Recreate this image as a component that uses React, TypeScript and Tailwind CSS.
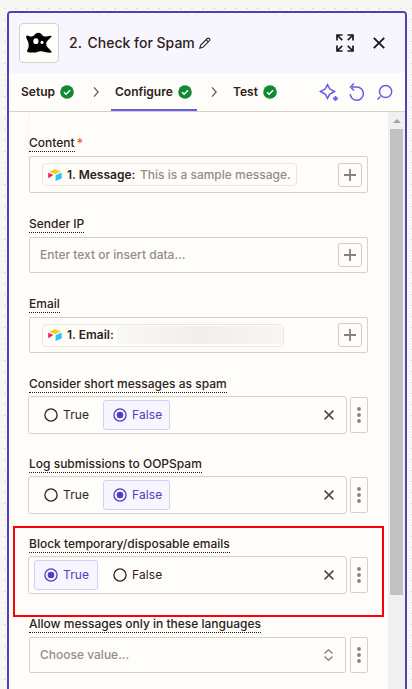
import React from "react";

function Check() {
  return (
    <svg width="14" height="14" viewBox="0 0 14 14" className="shrink-0">
      <circle cx="7" cy="7" r="6.8" fill="#0f8a35" />
      <path d="M4 7.2 6.1 9.2 10.1 5.2" fill="none" stroke="#fff" strokeWidth="1.5" />
    </svg>
  );
}

function Chevron() {
  return (
    <svg width="7" height="12" viewBox="0 0 7 12" className="shrink-0">
      <path d="M1 1.3 5.2 6 1 10.7" fill="none" stroke="#5f5b57" strokeWidth="1.2" />
    </svg>
  );
}

function Ghost() {
  return (
    <svg width="28" height="24" viewBox="0 0 28 24">
      <path
        d="M1.200 5.300C1.600 3.900 3.200 4.800 4.500 5.300 6.200 6 8 5.300 9.200 4.200 10.200 2.700 11.500 1.700 13.400 1.700c2 0 3 1.200 4.200 2.900 1.400 1.300 3.400 1.100 5.100.700 1.600-.3 3.300-1.100 3.700-.2.3 1-1 1.700-2.100 2.900-1.700 1.500-3 2.700-3.100 4.500 0 2 .9 3.500 2.100 4.600 1.200 1.100 2.800 2.500 3.500 4.500-2.400.3-4.700.1-6.700-.5-2.100-.6-3.800-1-5.900-.7-1.700.2-2.800 1.100-5 1.100-2.200.100-5.200.100-6.600-.600-1.300-.800.500-2.600.900-4.600.3-1.500.3-3-.1-4.600C2.900 9.500.8 7.300 1.200 5.300Z"
        fill="#000"
      />
      <ellipse cx="10.900" cy="10.200" rx="2.600" ry="2.900" fill="#fffdf9" />
      <ellipse cx="17" cy="11.400" rx="1.500" ry="1.700" fill="#fffdf9" />
    </svg>
  );
}

function Airtable() {
  return (
    <svg width="14" height="12" viewBox="0 0 14 12" className="shrink-0">
      <path d="M.8 2.7 7 .2l6.200 2.500L7 5.100Z" fill="#f7cb2d" />
      <path d="M7.600 6 13.700 3.700v5.900l-6.100 2.300Z" fill="#2dc5f5" />
      <path d="M.2 3.800 5.500 6.100.2 9.300Z" fill="#e5294e" />
    </svg>
  );
}

function Label({ children, required }: { children: React.ReactNode; required?: boolean }) {
  return (
    <div className="mb-1 flex h-[17px] text-xs font-medium">
      <span className="h-[17px] border-b border-dotted border-[#1f1718] leading-[15px] whitespace-nowrap">{children}</span>
      {required && <span className="ml-0.5 text-[13px] leading-[16px] text-[#ff5a1f]">*</span>}
    </div>
  );
}

function TextBox({ children, className }: { children: React.ReactNode; className?: string }) {
  return (
    <div className={"flex w-[339px] items-center justify-between rounded-[2px] border border-[#d4d1c6] pr-[5px] " + (className ?? "h-9")}>
      {children}
      <div className="flex size-6 items-center justify-center rounded-[3px] border border-[#d0cdc1]">
        <svg width="12" height="12" viewBox="0 0 12 12">
          <path d="M0 6h12M6 0v12" stroke="#88827e" strokeWidth="1.8" />
        </svg>
      </div>
    </div>
  );
}

function Menu() {
  return (
    <div className="flex h-9 w-[18px] items-center justify-center rounded-[2px] border border-[#d4d1c6]">
      <svg width="4" height="16" viewBox="0 0 4 16" fill="#88827e">
        <circle cx="2" cy="2" r="1.9" />
        <circle cx="2" cy="8" r="1.9" />
        <circle cx="2" cy="14" r="1.9" />
      </svg>
    </div>
  );
}

function Option({ label, on, width }: { label: string; on: boolean; width: string }) {
  return (
    <div
      className={
        "flex h-[30px] items-center rounded-[3px] border pl-[9px] " +
        width +
        (on ? " border-[#d3d0f8] bg-[#f7f5fe] text-[#503ebd]" : " border-transparent")
      }
    >
      <svg width="14" height="14" viewBox="0 0 14 14" className="mr-[5px] shrink-0">
        <circle cx="7" cy="7" r="6.100" fill="none" stroke="currentColor" strokeWidth="1.300" />
        {on && <circle cx="7" cy="7" r="3.300" fill="currentColor" />}
      </svg>
      <span className="text-xs tracking-[0.1px]">{label}</span>
    </div>
  );
}

function RadioField({ label, value }: { label: string; value: boolean }) {
  return (
    <div className="mb-[23px]">
      <Label>{label}</Label>
      <div className="-my-px -ml-px flex w-[340px] items-center justify-between">
        <div className="flex h-[38px] w-[319px] items-center rounded-[3px] border border-[#d4d1c6] pr-3 pl-[5px]">
          <Option label="True" on={value} width="w-16" />
          <div className="w-[5px]" />
          <Option label="False" on={!value} width="w-[67px]" />
          <svg width="10" height="10" viewBox="0 0 10 10" className="ml-auto">
            <path d="m.6.6 8.800 8.800M9.400.6.6 9.400" stroke="#4d4542" strokeWidth="1.500" />
          </svg>
        </div>
        <Menu />
      </div>
    </div>
  );
}

export default function App() {
  return (
    <div className="relative h-[689px] w-[412px] overflow-hidden bg-[#f8f7f3] bg-[radial-gradient(circle_at_5px_8.5px,#dddad3_0.7px,transparent_1px)] bg-[size:11px_11px] pt-[11px] pl-[7px] font-['Inter',sans-serif] text-xs text-[#2b2220]">
      <div className="flex h-[700px] w-[400px] flex-col overflow-hidden rounded-t-[4px] border-2 border-[#503ebd] bg-[#fffdf9]">
        <header className="flex h-[60px] shrink-0 items-center bg-[#f7f5fe] pl-[10px]">
          <div className="flex size-10 items-center justify-center rounded-[4px] border border-[#d4d1c6] bg-[#fffdf9]">
            <Ghost />
          </div>
          <h1 className="ml-[10px] w-[126px] text-sm font-medium whitespace-nowrap">
            2. <span className="ml-0.5">Check for Spam</span>
          </h1>
          <svg width="12" height="12" viewBox="0 0 12 12" className="ml-1">
            <path d="M.8 11.200 1.700 8.100 8.300 1.500q.9-.8 1.800 0l.4.4q.8.9 0 1.800L3.900 10.300ZM7.100 2.700l2.200 2.200" fill="none" stroke="#2b2220" strokeWidth="1.100" />
          </svg>
          <svg width="18" height="18" viewBox="0 0 18 18" className="ml-[125px]" fill="none" stroke="#1f1718" strokeWidth="1.700">
            <path d="M1 6.500V1h5.500M1 1l5.200 5.200M11.500 1H17v5.500M17 1l-5.200 5.200M1 11.500V17h5.500M1 17l5.200-5.200M17 11.500V17h-5.500M17 17l-5.200-5.200" />
          </svg>
          <svg width="12" height="12" viewBox="0 0 12 12" className="ml-[19px]">
            <path d="m.8.8 10.400 10.400M11.200.8.8 11.200" stroke="#1f1718" strokeWidth="1.900" />
          </svg>
        </header>
        <nav className="flex h-[39px] shrink-0 items-center border-b border-[#d4d1c6] pl-3 text-xs font-semibold">
          <span className="w-[39px]">Setup</span>
          <Check />
          <div className="ml-[19px] flex"><Chevron /></div>
          <div className="ml-[11px] flex h-full w-[86px] items-center border-b-2 border-[#695be8] pt-0.5 pl-1">
            <span className="w-[63px]">Configure</span>
            <Check />
          </div>
          <div className="ml-[14px] flex"><Chevron /></div>
          <span className="ml-[15px] w-[30px]">Test</span>
          <Check />
          <svg width="74" height="20" viewBox="0 0 74 20" className="ml-[42px]" fill="none" stroke="#695be8" strokeWidth="1.500">
            <path d="M8.500 2.500Q9.700 4.800 10.700 6.800 12.700 7.800 15.500 9.500 12.700 11.200 10.700 12.200 9.700 14.200 8.500 16.500 7.300 14.200 6.300 12.200 4.300 11.200 1.500 9.500 4.300 7.800 6.300 6.800 7.300 4.800 8.500 2.500Z" />
            <path d="M14 16.500h5M16.500 14v5" strokeWidth="1.800" />
            <path d="M33 5h5a6.600 6.600 0 1 1-6.800 7M35 1.500 31.500 5 35 8.500" />
            <circle cx="66.600" cy="9.500" r="6.100" />
            <path d="m61.500 14.500-3 3" />
          </svg>
        </nav>
        <div className="flex min-h-0 grow">
          <main className="w-[379px] shrink-0 pt-[23px] pl-5">
            <section className="mb-[23px]">
              <Label required>Content</Label>
              <TextBox className="h-[37px]">
                <div className="ml-3 flex h-[23px] w-[255px] items-center rounded-[4px] border border-[#eae7dc] pl-[5px] whitespace-nowrap">
                  <Airtable />
                  <b className="ml-[5px] w-[73px] font-semibold">1. Message:</b>
                  <span className="font-medium text-[#938d87]">This is a sample message.</span>
                </div>
              </TextBox>
            </section>
            <section className="mb-[23px]">
              <Label>Sender IP</Label>
              <TextBox>
                <span className="pl-[10px] font-medium text-[#938d87]">Enter text or insert data...</span>
              </TextBox>
            </section>
            <section className="mb-[23px]">
              <Label>Email</Label>
              <TextBox>
                <div className="ml-3 flex h-[23px] w-[242px] items-center rounded-[4px] border border-[#eae7dc] pl-[5px] whitespace-nowrap">
                  <Airtable />
                  <b className="ml-[5px] w-[50px] font-semibold">1. Email:</b>
                  <span className="h-[18px] w-[166px] rounded-r bg-linear-to-r from-[#faf8f5] via-[#f1efec] to-[#f8f6f3]" />
                </div>
              </TextBox>
            </section>
            <RadioField label="Consider short messages as spam" value={false} />
            <RadioField label="Log submissions to OOPSpam" value={false} />
            <RadioField label="Block temporary/disposable emails" value={true} />
            <section>
              <Label>Allow messages only in these languages</Label>
              <div className="flex w-[339px] justify-between">
                <div className="flex h-9 w-[317px] items-center justify-between rounded-[2px] border border-[#d4d1c6] pr-3 pl-[10px] font-medium text-[#938d87]">
                  Choose value...
                  <svg width="9" height="12" viewBox="0 0 9 12" fill="none" stroke="#88827e" strokeWidth="1.400">
                    <path d="m.5 4.500 4-3.700 4 3.700M.5 7.500l4 3.700 4-3.700" />
                  </svg>
                </div>
                <Menu />
              </div>
            </section>
          </main>
          <aside className="w-[17px] shrink-0 bg-[#f0f0f0] pr-0.5 pl-0.5">
            <div className="flex h-[17px] items-center justify-center">
              <svg width="8" height="4" viewBox="0 0 8 4"><path d="M0 4 4 0l4 4Z" fill="#a3a3a3" /></svg>
            </div>
            <div className="h-[466px] bg-[#c1c1c1]" />
          </aside>
        </div>
      </div>
      <div className="absolute top-[526px] left-[13px] h-[91px] w-[371px] border-2 border-[#fb0007]" />
      <div className="absolute top-[112px] left-[28px] h-[46px] border-l border-dotted border-[#eeece6]" />
    </div>
  );
}
